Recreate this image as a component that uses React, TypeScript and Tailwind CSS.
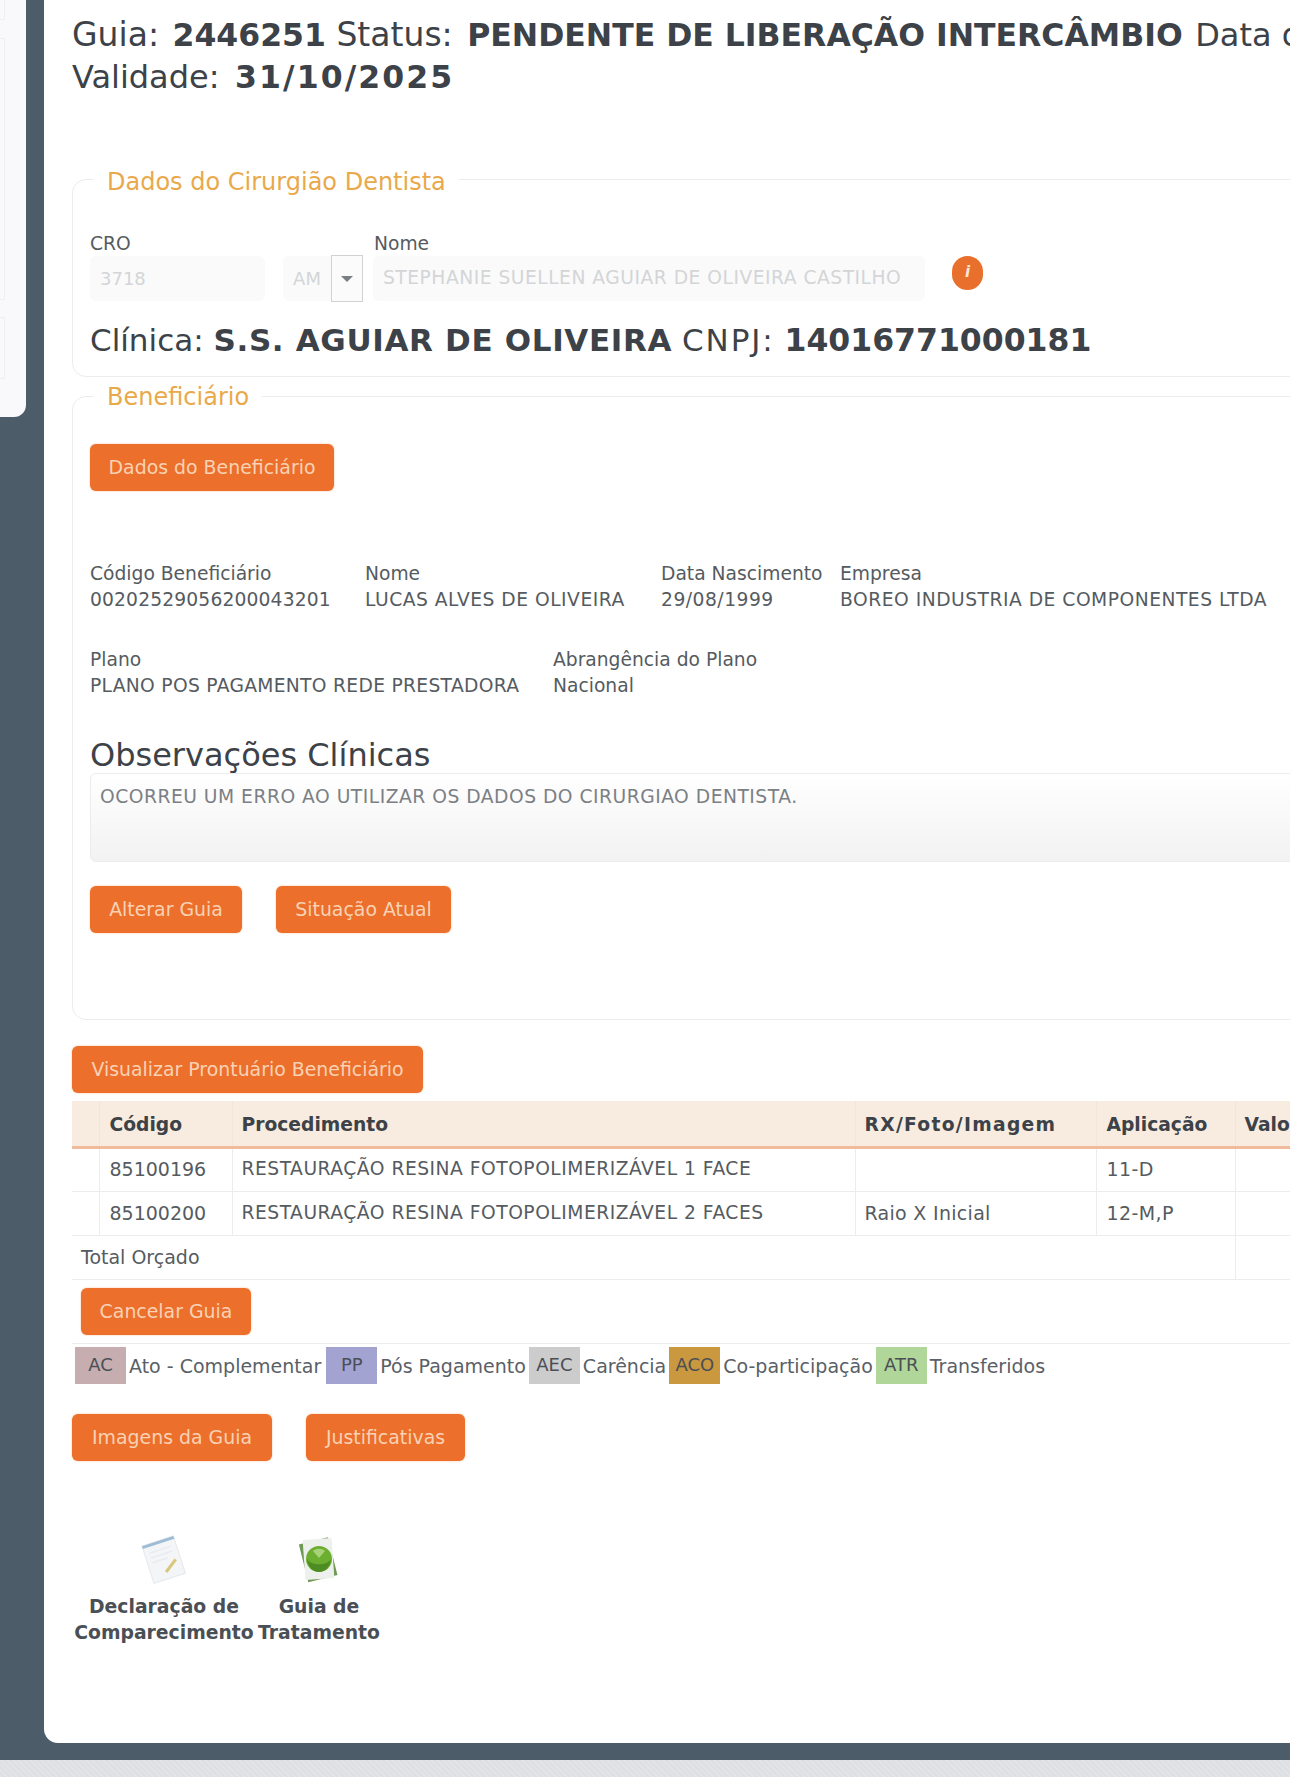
const font = "font-['DejaVu_Sans',Verdana,sans-serif]"

function OrangeButton({ children, className = "" }: { children: React.ReactNode; className?: string }) {
  return (
    <button className={`h-[47px] rounded-[6px] bg-[#ec6f2c] text-[18.9px] text-[#f9d2b4] shadow-[0_0_2px_#f5b78f] ${className}`}>
      {children}
    </button>
  )
}

function Legend({ children, className = "" }: { children: React.ReactNode; className?: string }) {
  return (
    <div className={`absolute left-[21px] bg-white px-[13px] text-[24px] leading-[30px] text-[#e9a94b] ${className}`}>
      {children}
    </div>
  )
}

function Info({ label, value, className = "", valueClass = "tracking-[0.5px]" }: { label: string; value: string; className?: string; valueClass?: string }) {
  return (
    <div className={`text-[18.7px] leading-[26px] text-[#555b60] whitespace-nowrap ${className}`}>
      <div>{label}</div>
      <div className={valueClass}>{value}</div>
    </div>
  )
}

function Swatch({ code, text, bg, className = "" }: { code: string; text: string; bg: string; className?: string }) {
  return (
    <div className={`flex items-center gap-[3px] ${className}`}>
      <div className={`flex h-[37px] w-[51px] items-start justify-center pt-[4px] text-[18px] text-[#4a4f55] ${bg}`}>{code}</div>
      <span className="mt-[2px] text-[19px] text-[#5a6066]">{text}</span>
    </div>
  )
}

function DocIcon() {
  return (
    <svg width="50" height="50" viewBox="0 0 50 50" className="blur-[0.6px]">
      <g transform="rotate(-18 25 25)">
        <rect x="8" y="6" width="33" height="39" fill="#f4f5f7" stroke="#e6e8ec" />
        <rect x="8" y="6" width="33" height="3" fill="#9dbcd6" />
        <path d="M13 15h22M13 20h22M13 25h16" stroke="#e9ebef" strokeWidth="1.5" />
        <path d="M23 38l13-9" stroke="#d8c67a" strokeWidth="3" />
      </g>
    </svg>
  )
}

function GuiaIcon() {
  return (
    <svg width="50" height="50" viewBox="0 0 50 50" className="blur-[0.6px]">
      <rect x="9" y="6" width="30" height="39" fill="#6f9a55" transform="rotate(-14 25 25)" />
      <rect x="10" y="5" width="29" height="40" fill="#eef0ee" transform="rotate(-4 25 25)" />
      <circle cx="25" cy="25" r="13" fill="#6cae2f" />
      <path d="M13 25c4 7 20 7 24 0-1 8-6 13-12 13s-11-5-12-13z" fill="#4d8c22" />
      <path d="M19 17l6 7 6-7c-3-3-9-3-12 0z" fill="#a7d27a" />
    </svg>
  )
}

const rows = [
  ["85100196", "RESTAURAÇÃO RESINA FOTOPOLIMERIZÁVEL 1 FACE", "", "11-D"],
  ["85100200", "RESTAURAÇÃO RESINA FOTOPOLIMERIZÁVEL 2 FACES", "Raio X Inicial", "12-M,P"],
]

export default function App() {
  return (
    <div className={`${font} flex h-[1777px] w-[1290px] flex-col overflow-hidden bg-[repeating-linear-gradient(45deg,#e2e4e7_0,#e2e4e7_2px,#dcdfe3_2px,#dcdfe3_4px)]`}>
      <div className="flex h-[1760px] bg-[#4c5c69] pb-[17px]">
        {/* sidebar stub */}
        <div className="h-[417px] w-[26px] shrink-0 rounded-br-[12px] bg-[#f9f9fb]">
          <div className="h-[20px] w-[5px] border-r border-b border-[#eeeff1]" />
          <div className="mt-[18px] h-[262px] w-[5px] border-y border-r border-[#eeeff1]" />
          <div className="mt-[17px] h-[62px] w-[5px] border-y border-r border-[#eeeff1]" />
        </div>
        <div className="ml-[18px] min-w-[1500px] rounded-bl-[14px] bg-white pl-[28px] pt-[14px]">
          <div className="text-[33px] leading-[41px] text-[#3c4248] whitespace-nowrap">
            <div>
              Guia: <b className="ml-[3px] text-[31.5px]">2446251</b> Status: <b className="ml-[4px] text-[31.5px]">PENDENTE DE LIBERAÇÃO INTERCÂMBIO</b> <span className="ml-[2px] text-[32px]">Data de</span>
            </div>
            <div>
              <span className="text-[32px]">Validade:</span> <b className="ml-[5px] text-[31.5px] tracking-[2.1px]">31/10/2025</b>
            </div>
          </div>

          {/* Dados do Cirurgião Dentista */}
          <div className="relative mt-[81px] h-[198px] rounded-[14px] border border-[#ececec] px-[17px] pt-[51px]">
            <Legend className="top-[-13px]">Dados do Cirurgião Dentista</Legend>
            <div className="flex text-[18.7px] leading-[26px] text-[#555b60]">
              <span className="w-[284px]">CRO</span>
              <span>Nome</span>
            </div>
            <div className="mt-[-2px] flex items-center text-[18px] text-[#d3d5d7]">
              <div className="flex h-[45px] w-[175px] items-center rounded-[6px] bg-[#fafafa] pl-[10px]">3718</div>
              <div className="ml-[18px] flex h-[45px] w-[48px] items-center justify-center rounded-l-[6px] bg-[#fafafa]">AM</div>
              <div className="flex h-[47px] w-[32px] items-center justify-center border border-[#cfd3d6] bg-[#fbfbfb]">
                <div className="h-0 w-0 border-x-[6px] border-t-[6px] border-x-transparent border-t-[#7b7f83]" />
              </div>
              <div className="ml-[10px] flex h-[45px] w-[552px] items-center rounded-[6px] bg-[#fafafa] pl-[10px] text-[18.7px] tracking-[0.5px] whitespace-nowrap">
                STEPHANIE SUELLEN AGUIAR DE OLIVEIRA CASTILHO
              </div>
              <div className="mb-[12px] ml-[27px] flex h-[34px] w-[31px] items-center justify-center rounded-full bg-[#e8702c] text-[15px] font-bold italic text-[#fbe6d6]">
                i
              </div>
            </div>
            <div className="mt-[18px] text-[31px] leading-[40px] text-[#3c4248] whitespace-nowrap">
              Clínica: <b className="tracking-[0.65px]">S.S. AGUIAR DE OLIVEIRA</b> <span className="tracking-[1.9px]">CNPJ:</span> <b className="text-[31.5px]">14016771000181</b>
            </div>
          </div>

          {/* Beneficiário */}
          <div className="relative mt-[19px] h-[624px] rounded-[14px] border border-[#ececec] px-[17px] pt-[47px]">
            <Legend className="top-[-15px]">Beneficiário</Legend>
            <OrangeButton className="w-[244px]">Dados do Beneficiário</OrangeButton>
            <div className="mt-[70px] flex">
              <Info label="Código Beneficiário" value="00202529056200043201" className="w-[275px]" valueClass="tracking-[0.15px]" />
              <Info label="Nome" value="LUCAS ALVES DE OLIVEIRA" className="w-[296px]" />
              <Info label="Data Nascimento" value="29/08/1999" className="w-[179px]" />
              <Info label="Empresa" value="BOREO INDUSTRIA DE COMPONENTES LTDA" />
            </div>
            <div className="mt-[34px] flex">
              <Info label="Plano" value="PLANO POS PAGAMENTO REDE PRESTADORA" className="w-[463px]" valueClass="tracking-[0.3px]" />
              <Info label="Abrangência do Plano" value="Nacional" valueClass="" />
            </div>
            <div className="mt-[36px] text-[32px] leading-[40px] text-[#3c4248]">Observações Clínicas</div>
            <div className="mt-[-2px] h-[89px] rounded-[6px] border border-[#ececec] bg-gradient-to-b from-white to-[#f2f2f2] pl-[9px] pt-[10px] text-[18.7px] leading-[26px] tracking-[0.5px] text-[#7b8085]">
              OCORREU UM ERRO AO UTILIZAR OS DADOS DO CIRURGIAO DENTISTA.
            </div>
            <div className="mt-[24px] flex gap-[34px]">
              <OrangeButton className="w-[152px]">Alterar Guia</OrangeButton>
              <OrangeButton className="w-[175px]">Situação Atual</OrangeButton>
            </div>
          </div>

          <OrangeButton className="mt-[26px] block w-[351px]">Visualizar Prontuário Beneficiário</OrangeButton>

          {/* procedimentos */}
          <table className="mt-[8px] w-[1400px] table-fixed border-collapse text-[19px] text-[#555b60]">
            <colgroup>
              <col className="w-[27px]" />
              <col className="w-[133px]" />
              <col className="w-[623px]" />
              <col className="w-[241px]" />
              <col className="w-[139px]" />
              <col />
            </colgroup>
            <thead>
              <tr className="h-[46px] border-b-[3px] border-[#efbb9c] bg-[#f7ecdf] text-left text-[18.7px] text-[#3c4248]">
                <th className="border-r border-[#f0e6da]" />
                <th className="border-r border-[#f0e6da] pl-[10px] pt-[3px] font-bold">Código</th>
                <th className="border-r border-[#f0e6da] pl-[9px] pt-[3px] font-bold">Procedimento</th>
                <th className="border-r border-[#f0e6da] pl-[9px] pt-[3px] font-bold tracking-[1.3px]">RX/Foto/Imagem</th>
                <th className="border-r border-[#f0e6da] pl-[10px] pt-[3px] font-bold">Aplicação</th>
                <th className="pl-[9px] pt-[3px] font-bold">Valor</th>
              </tr>
            </thead>
            <tbody>
              {rows.map((r) => (
                <tr key={r[0]} className="h-[44px] border-b border-[#ececec]">
                  <td className="border-r border-[#ececec]" />
                  <td className="border-r border-[#ececec] pl-[10px]">{r[0]}</td>
                  <td className="border-r border-[#ececec] pl-[9px] text-[18.7px] tracking-[0.5px] whitespace-nowrap">{r[1]}</td>
                  <td className="border-r border-[#ececec] pl-[9px] tracking-[0.3px]">{r[2]}</td>
                  <td className="border-r border-[#ececec] pl-[10px] tracking-[0.4px]">{r[3]}</td>
                  <td />
                </tr>
              ))}
              <tr className="h-[44px] border-b border-[#ececec]">
                <td colSpan={5} className="border-r border-[#ececec] pl-[9px]">Total Orçado</td>
                <td />
              </tr>
              <tr className="h-[64px] border-b border-[#ececec]">
                <td colSpan={6} className="pl-[9px] align-middle">
                  <OrangeButton className="block w-[170px]">Cancelar Guia</OrangeButton>
                </td>
              </tr>
            </tbody>
          </table>

          <div className="mt-[3px] ml-[3px] flex gap-[3px]">
            <Swatch code="AC" text="Ato - Complementar" bg="bg-[#c6aeb0]" className="mr-[2px]" />
            <Swatch code="PP" text="Pós Pagamento" bg="bg-[#a3a3d2]" />
            <Swatch code="AEC" text="Carência" bg="bg-[#cccccc]" />
            <Swatch code="ACO" text="Co-participação" bg="bg-[#c9983f]" />
            <Swatch code="ATR" text="Transferidos" bg="bg-[#b0d69a]" />
          </div>

          <div className="mt-[30px] flex gap-[34px]">
            <OrangeButton className="w-[200px]">Imagens da Guia</OrangeButton>
            <OrangeButton className="w-[159px]">Justificativas</OrangeButton>
          </div>

          <div className="mt-[73px] flex text-center text-[18.8px] font-bold leading-[26px] text-[#4a4f55]">
            <div className="ml-[2px] flex w-[180px] flex-col items-center">
              <DocIcon />
              <div className="mt-[10px]">Declaração de<br />Comparecimento</div>
            </div>
            <div className="flex w-[130px] flex-col items-center">
              <GuiaIcon />
              <div className="mt-[10px]">Guia de<br />Tratamento</div>
            </div>
          </div>
        </div>
      </div>
    </div>
  )
}
